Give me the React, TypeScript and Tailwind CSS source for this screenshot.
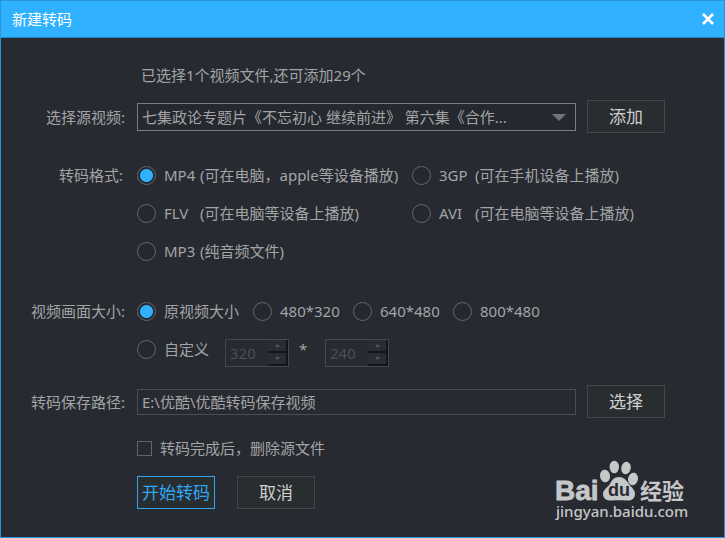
import { useState } from 'react';
import type { ReactNode } from 'react';

const formats = [
  { name: 'MP4', desc: '(可在电脑，apple等设备播放)' },
  { name: '3GP', desc: '(可在手机设备上播放)' },
  { name: 'FLV', desc: '(可在电脑等设备上播放)' },
  { name: 'AVI', desc: '(可在电脑等设备上播放)' },
  { name: 'MP3', desc: '(纯音频文件)' },
];

const sizes = ['原视频大小', '480*320', '640*480', '800*480'];

type RadioProps = {
  group: string;
  value: string;
  current: string;
  onPick: (value: string) => void;
  children: ReactNode;
};

function Radio({ group, value, current, onPick, children }: RadioProps) {
  return (
    <label className="flex h-5 items-center gap-2 whitespace-nowrap">
      <input
        type="radio"
        name={group}
        checked={current === value}
        onChange={() => onPick(value)}
        className="h-[19px] w-[19px] shrink-0 appearance-none rounded-full border border-[#65676b] bg-[#25282e] checked:bg-[radial-gradient(circle,#30b1ff_6px,transparent_7px)]"
      />
      {children}
    </label>
  );
}

function Spinner({ label, value }: { label: string; value: number }) {
  return (
    <div className="flex h-7 w-16 border border-[#44474d] text-[#4b4f56]">
      <input aria-label={label} defaultValue={value} disabled className="w-0 flex-1 bg-transparent pl-1" />
      <div className="flex w-5 flex-col">
        <button type="button" disabled aria-label={`${label}+`} className="flex flex-1 items-center justify-center border-r-2 border-b-2 border-[#14161a] bg-[#292c33]">
          <svg width="5" height="3" viewBox="0 0 5 3" fill="#55585e"><path d="M0 3L2.5 0L5 3Z" /></svg>
        </button>
        <button type="button" disabled aria-label={`${label}-`} className="flex flex-1 items-center justify-center border-r-2 border-b-2 border-[#14161a] bg-[#292c33]">
          <svg width="5" height="3" viewBox="0 0 5 3" fill="#55585e"><path d="M0 0L2.5 3L5 0Z" /></svg>
        </button>
      </div>
    </div>
  );
}

function Button({ primary, children }: { primary?: boolean; children: ReactNode }) {
  return (
    <button
      type="button"
      className={`h-[33px] w-[78px] shrink-0 border bg-[#282d30] text-[17px] ${primary ? 'border-[#2ea5ee] text-[#30a8f5]' : 'border-[#43474b] text-[#cfcfcf]'}`}
    >
      {children}
    </button>
  );
}

function Watermark() {
  return (
    <svg width="136" height="66" viewBox="0 0 136 66" fill="#c6c7c9" className="absolute right-9 bottom-3">
      <text x="3" y="41" fontSize="28" fontWeight="700" stroke="#c6c7c9" strokeWidth="0.8" fontFamily="'Liberation Sans', Arial, sans-serif">Bai</text>
      {/* paw */}
      <ellipse cx="53" cy="17" rx="5" ry="6.3" transform="rotate(-8 53 17)" />
      <ellipse cx="62.300" cy="8" rx="4.700" ry="6.300" />
      <ellipse cx="74" cy="9" rx="4.700" ry="6.300" transform="rotate(14 74 9)" />
      <ellipse cx="81" cy="20" rx="5" ry="6.300" transform="rotate(12 81 20)" />
      <path d="M67 18C72 18 74 21 77 25C80 29 83 31 83 35C83 40 79 42 74 41.500C69 41 65 41 60 41.500C54 42 51 39 51 35C51 31 55 29 58 25C60 21 62 18 67 18Z" />
      <text x="56" y="37" fontSize="18" fontWeight="700" fill="#272a31" fontFamily="'Liberation Sans', Arial, sans-serif">du</text>
      <text x="88" y="40" fontSize="22" fontWeight="700" fontFamily="'Noto Sans CJK SC', sans-serif">经验</text>
      <text x="4" y="58" fontSize="15" fontWeight="500" fontFamily="'Noto Sans', sans-serif">jingyan.baidu.com</text>
    </svg>
  );
}

export default function App() {
  const [format, setFormat] = useState('MP4');
  const [size, setSize] = useState('原视频大小');

  return (
    <div className="relative flex min-h-screen flex-col border border-[#2796d8] bg-[#272a31] font-['Noto_Sans','Noto_Sans_CJK_SC',sans-serif] text-[15px] leading-5 text-[#a3a4a6]">
      <header className="flex h-[37px] items-center justify-between border-b border-[#2585bf] bg-[#30b1ff] pr-2.5 pl-[11px] text-white">
        <h1>新建转码</h1>
        <button type="button" aria-label="关闭">
          <svg width="12" height="12" viewBox="0 0 12 12" stroke="currentColor" strokeWidth="2.600">
            <path d="M1 1L11 11M11 1L1 11" />
          </svg>
        </button>
      </header>

      <form className="grid grid-cols-[124px_1fr] gap-x-3 pt-[27px] pr-[59px] pb-7">
        <p className="col-start-2 pl-1">已选择1个视频文件,还可添加29个</p>

        <label htmlFor="source" className="mt-[15px] self-center text-right">选择源视频:</label>
        <div className="mt-[15px] flex items-center gap-[11px]">
          <div className="relative flex h-7 min-w-0 flex-1">
            <select id="source" className="w-full appearance-none truncate border border-[#7b7c7f] bg-[#25282e] pr-8 pl-1">
              <option>七集政论专题片《不忘初心 继续前进》 第六集《合作...</option>
            </select>
            <svg width="14" height="7" viewBox="0 0 14 7" fill="#737477" className="pointer-events-none absolute top-[11px] right-2.5">
              <path d="M0 0H14L7 7Z" />
            </svg>
          </div>
          <Button>添加</Button>
        </div>

        <div id="format-label" className="mt-8 pr-0.5 text-right">转码格式:</div>
        <div role="radiogroup" aria-labelledby="format-label" className="mt-8 grid grid-cols-[275px_1fr] gap-y-[18px]">
          {formats.map((f) => (
            <Radio key={f.name} group="format" value={f.name} current={format} onPick={setFormat}>
              <span className="flex">
                <span className="w-9">{f.name}</span>
                {f.desc}
              </span>
            </Radio>
          ))}
        </div>

        <div id="size-label" className="mt-10 text-right">视频画面大小:</div>
        <div role="radiogroup" aria-labelledby="size-label" className="mt-10 flex flex-col gap-[18px]">
          <div className="grid grid-cols-[116px_100px_100px_1fr]">
            {sizes.map((s) => (
              <Radio key={s} group="size" value={s} current={size} onPick={setSize}>
                {s}
              </Radio>
            ))}
          </div>
          <div className="flex items-start">
            <Radio group="size" value="custom" current={size} onPick={setSize}>
              自定义
            </Radio>
            <div className="ml-4 flex">
              <Spinner label="宽" value={320} />
              <span className="w-9 pr-2 text-center">*</span>
              <Spinner label="高" value={240} />
            </div>
          </div>
        </div>

        <label htmlFor="path" className="mt-[18px] self-center text-right">转码保存路径:</label>
        <div className="mt-[18px] flex items-center gap-[11px]">
          <input id="path" defaultValue="E:\优酷\优酷转码保存视频" className="h-[26px] min-w-0 flex-1 border border-[#4a4d53] bg-transparent px-1" />
          <Button>选择</Button>
        </div>

        <label className="col-start-2 mt-5 flex h-5 items-center gap-2">
          <input type="checkbox" className="h-[15px] w-[15px] appearance-none border border-[#62656a] checked:bg-[#30b1ff]" />
          转码完成后，删除源文件
        </label>

        <div className="col-start-2 mt-[18px] flex gap-[22px]">
          <Button primary>开始转码</Button>
          <Button>取消</Button>
        </div>
      </form>

      <Watermark />
    </div>
  );
}
